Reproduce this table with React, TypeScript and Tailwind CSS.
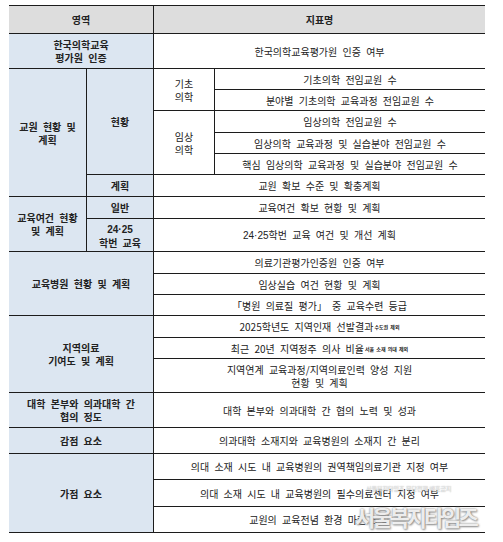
import React from 'react';

const font = "font-['Noto_Sans_CJK_KR',sans-serif]";

interface CellProps {
  className?: string;
  children?: React.ReactNode;
}

// 표의 한 칸: 아래 테두리는 항상, 왼쪽 테두리는 첫 열이 아닐 때만
const Cell: React.FC<CellProps> = ({ className = '', children }) => (
  <div
    className={`flex items-center justify-center text-center border-b border-[#1c1c1c] px-1 text-[10px] leading-[13px] text-[#222] [word-spacing:3px] ${className}`}
  >
    <div>{children}</div>
  </div>
);

const Sup: React.FC<{ children: React.ReactNode }> = ({ children }) => (
  <sup className="text-[5px] font-bold relative -top-[2px] [word-spacing:1px] ml-[1px]">{children}</sup>
);

// 숫자와 가운뎃점은 좁은 글꼴로
const Num: React.FC<{ children: React.ReactNode }> = ({ children }) => (
  <span className="font-['Liberation_Sans',sans-serif]">{children}</span>
);

export default function App() {
  const blue = 'bg-[#dce6f1]';
  const bl = 'border-l border-l-[#1c1c1c]';

  return (
    <div className={`relative w-[503px] h-[542px] overflow-hidden bg-white pt-[5px] pl-[9px] ${font}`}>
      <div className="grid w-[476px] border-t border-[#1c1c1c] grid-cols-[77px_67px_61px_271px] grid-rows-[28px_35px_21px_21px_22px_21px_21px_22px_22px_33px_22px_21px_21px_22px_21px_34px_35px_26px_26px_27px_26px]">
        {/* 헤더 */}
        <Cell className="col-start-1 col-span-2 row-start-1 bg-[#dddddd] font-bold">영역</Cell>
        <Cell className={`col-start-3 col-span-2 row-start-1 bg-[#dddddd] font-bold ${bl}`}>지표명</Cell>

        {/* 평가원 인증 */}
        <Cell className={`col-start-1 col-span-2 row-start-2 font-bold ${blue}`}>
          한국의학교육<br />평가원 인증
        </Cell>
        <Cell className={`col-start-3 col-span-2 row-start-2 ${bl}`}>한국의학교육평가원 인증 여부</Cell>

        {/* 교원 현황 및 계획 */}
        <Cell className={`col-start-1 row-start-3 row-span-6 font-bold ${blue}`}>
          교원 현황 및<br />계획
        </Cell>
        <Cell className={`col-start-2 row-start-3 row-span-5 font-bold ${bl} ${blue}`}>현황</Cell>
        <Cell className={`col-start-3 row-start-3 row-span-2 ${bl}`}>
          기초<br />의학
        </Cell>
        <Cell className={`col-start-4 row-start-3 ${bl}`}>기초의학 전임교원 수</Cell>
        <Cell className={`col-start-4 row-start-4 ${bl}`}>분야별 기초의학 교육과정 전임교원 수</Cell>
        <Cell className={`col-start-3 row-start-5 row-span-3 ${bl}`}>
          임상<br />의학
        </Cell>
        <Cell className={`col-start-4 row-start-5 ${bl}`}>임상의학 전임교원 수</Cell>
        <Cell className={`col-start-4 row-start-6 ${bl}`}>임상의학 교육과정 및 실습분야 전임교원 수</Cell>
        <Cell className={`col-start-4 row-start-7 ${bl}`}>핵심 임상의학 교육과정 및 실습분야 전임교원 수</Cell>
        <Cell className={`col-start-2 row-start-8 font-bold ${bl} ${blue}`}>계획</Cell>
        <Cell className={`col-start-3 col-span-2 row-start-8 ${bl}`}>교원 확보 수준 및 확충계획</Cell>

        {/* 교육여건 */}
        <Cell className={`col-start-1 row-start-9 row-span-2 font-bold ${blue}`}>
          교육여건 현황<br />및 계획
        </Cell>
        <Cell className={`col-start-2 row-start-9 font-bold ${bl} ${blue}`}>일반</Cell>
        <Cell className={`col-start-3 col-span-2 row-start-9 ${bl}`}>교육여건 확보 현황 및 계획</Cell>
        <Cell className={`col-start-2 row-start-10 font-bold ${bl} ${blue}`}>
          <Num>24·25</Num><br />학번 교육
        </Cell>
        <Cell className={`col-start-3 col-span-2 row-start-10 ${bl}`}>
          <Num>24·25</Num>학번 교육 여건 및 개선 계획
        </Cell>

        {/* 교육병원 */}
        <Cell className={`col-start-1 col-span-2 row-start-11 row-span-3 font-bold ${blue}`}>
          교육병원 현황 및 계획
        </Cell>
        <Cell className={`col-start-3 col-span-2 row-start-11 ${bl}`}>의료기관평가인증원 인증 여부</Cell>
        <Cell className={`col-start-3 col-span-2 row-start-12 ${bl}`}>임상실습 여건 현황 및 계획</Cell>
        <Cell className={`col-start-3 col-span-2 row-start-13 ${bl}`}>「병원 의료질 평가」 중 교육수련 등급</Cell>

        {/* 지역의료 */}
        <Cell className={`col-start-1 col-span-2 row-start-14 row-span-3 font-bold ${blue}`}>
          지역의료<br />기여도 및 계획
        </Cell>
        <Cell className={`col-start-3 col-span-2 row-start-14 ${bl}`}>
          2025학년도 지역인재 선발결과<Sup>수도권 제외</Sup>
        </Cell>
        <Cell className={`col-start-3 col-span-2 row-start-15 ${bl}`}>
          최근 20년 지역정주 의사 비율<Sup>서울 소재 의대 제외</Sup>
        </Cell>
        <Cell className={`col-start-3 col-span-2 row-start-16 ${bl}`}>
          지역연계 교육과정/지역의료인력 양성 지원<br />현황 및 계획
        </Cell>

        {/* 협의 정도 */}
        <Cell className={`col-start-1 col-span-2 row-start-17 font-bold ${blue}`}>
          대학 본부와 의과대학 간<br />협의 정도
        </Cell>
        <Cell className={`col-start-3 col-span-2 row-start-17 ${bl}`}>대학 본부와 의과대학 간 협의 노력 및 성과</Cell>

        {/* 감점 */}
        <Cell className={`col-start-1 col-span-2 row-start-18 font-bold ${blue}`}>감점 요소</Cell>
        <Cell className={`col-start-3 col-span-2 row-start-18 ${bl}`}>의과대학 소재지와 교육병원의 소재지 간 분리</Cell>

        {/* 가점 */}
        <Cell className={`col-start-1 col-span-2 row-start-19 row-span-3 font-bold ${blue}`}>가점 요소</Cell>
        <Cell className={`col-start-3 col-span-2 row-start-19 ${bl}`}>의대 소재 시도 내 교육병원의 권역책임의료기관 지정 여부</Cell>
        <Cell className={`col-start-3 col-span-2 row-start-20 ${bl}`}>의대 소재 시도 내 교육병원의 필수의료센터 지정 여부</Cell>
        <Cell className={`col-start-3 col-span-2 row-start-21 ${bl}`}>교원의 교육전념 환경 마련 노력</Cell>
      </div>

      {/* 워터마크 */}
      <span className="absolute left-[366px] top-[485px] whitespace-nowrap text-[6px] leading-[8px] text-white/80 [text-shadow:0_0_1px_#888]">
        서울복지타임즈 무단전재 배포금지
      </span>
      <span className="absolute left-[355px] top-[503px] whitespace-nowrap text-[22px] leading-[26px] font-bold tracking-[-3px] text-white/85 [text-shadow:0_0_2px_#777,1px_1px_2px_#999]">
        서울복지타임즈
      </span>
    </div>
  );
}
